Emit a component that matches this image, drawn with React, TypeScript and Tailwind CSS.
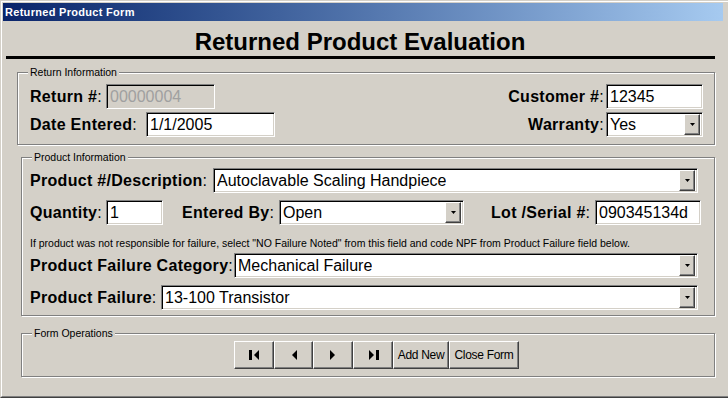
import React from 'react';

// Win2000-style bevels
const sunken =
  'border border-t-[#808080] border-l-[#808080] border-b-white border-r-white shadow-[inset_1px_1px_0_#000,inset_-1px_-1px_0_#d4d0c8]';
const raised =
  'border border-t-white border-l-white border-b-[#404040] border-r-[#404040] shadow-[inset_-1px_-1px_0_#808080]';
const etched = 'border border-[#808080] shadow-[inset_1px_1px_0_#fff,1px_1px_0_#fff]';

const Label: React.FC<{ text: string; className?: string }> = ({ text, className = '' }) => (
  <div className={`shrink-0 whitespace-nowrap text-[16px] leading-[20px] tracking-[0.3px] text-black ${className}`}>
    <span className="font-bold">{text}</span>:
  </div>
);

const TextBox: React.FC<{ value: string; className: string; disabled?: boolean }> = ({
  value,
  className,
  disabled,
}) => (
  <div
    className={`${sunken} ${className} h-[25px] shrink-0 pl-[3px] pt-[1px] text-[16px] leading-[21px] whitespace-nowrap overflow-hidden ${
      disabled ? 'bg-[#d4d0c8] text-[#a0a0a0]' : 'bg-white text-black'
    }`}
  >
    {value}
  </div>
);

const Combo: React.FC<{ value: string; className: string }> = ({ value, className }) => (
  <div
    className={`${sunken} ${className} h-[25px] shrink-0 bg-white flex items-center justify-between pl-[3px] pr-[2px]`}
  >
    <span className="text-[16px] leading-[21px] text-black whitespace-nowrap overflow-hidden">{value}</span>
    <div className={`${raised} w-[16px] h-[21px] bg-[#d4d0c8] flex items-center justify-center shrink-0`}>
      <svg width="5" height="3" viewBox="0 0 5 3">
        <polygon points="0,0 5,0 2.5,3" fill="#000" />
      </svg>
    </div>
  </div>
);

const GroupBox: React.FC<{ title: string; className: string; children: React.ReactNode }> = ({
  title,
  className,
  children,
}) => (
  <div className={`relative ${etched} ${className}`}>
    <span className="absolute -top-[7px] left-[10px] bg-[#d4d0c8] px-[2px] text-[10.5px] leading-[12px] text-black">
      {title}
    </span>
    {children}
  </div>
);

const NavButton: React.FC<{ className: string; children: React.ReactNode }> = ({ className, children }) => (
  <button
    className={`${raised} ${className} h-[28px] bg-[#d4d0c8] flex items-center justify-center text-[12px] tracking-[-0.3px] text-black`}
  >
    {children}
  </button>
);

export default function App() {
  return (
    <div className="w-[728px] h-[398px] bg-[#d4d0c8] font-['Liberation_Sans',Arial,sans-serif] overflow-hidden">
      <div className="h-full border-t border-l border-[#d4d0c8] border-b border-b-[#404040]">
        <div className="h-full border-t border-l border-white border-b border-b-[#808080] pt-[1px] pl-[1px] pr-[5px]">
          {/* Title bar */}
          <div className="h-[18px] bg-linear-to-r from-[#0a246a] to-[#a6caf0] flex items-center pl-[2px]">
            <span className="text-white font-bold text-[11px] tracking-[0.3px]">Returned Product Form</span>
          </div>

          {/* Heading */}
          <div className="pt-[8px] pr-[6px] flex justify-center">
            <h1 className="text-[24px] leading-[25px] font-bold text-black">Returned Product Evaluation</h1>
          </div>
          <div className="mt-[2px] ml-[3px] w-[709px] h-[3px] bg-black" />

          {/* Return Information */}
          <GroupBox title="Return Information" className="mt-[13px] ml-[14px] w-[698px] h-[73px]">
            <div className="flex justify-between pt-[11px] pl-[12px] pr-[11px]">
              <div className="flex flex-col gap-[3px]">
                <div className="flex items-center">
                  <Label text="Return #" className="w-[76px]" />
                  <TextBox value="00000004" className="w-[109px]" disabled />
                </div>
                <div className="flex items-center">
                  <Label text="Date Entered" className="w-[116px]" />
                  <TextBox value="1/1/2005" className="w-[129px]" />
                </div>
              </div>
              <div className="flex flex-col items-end gap-[3px]">
                <div className="flex items-center">
                  <Label text="Customer #" className="mr-[2px]" />
                  <TextBox value="12345" className="w-[97px]" />
                </div>
                <div className="flex items-center">
                  <Label text="Warranty" className="mr-[2px]" />
                  <Combo value="Yes" className="w-[97px]" />
                </div>
              </div>
            </div>
          </GroupBox>

          {/* Product Information */}
          <GroupBox title="Product Information" className="mt-[12px] ml-[18px] w-[694px] h-[159px]">
            <div className="flex flex-col pt-[10px] pl-[8px]">
              <div className="flex items-center">
                <Label text="Product #/Description" className="w-[183px]" />
                <Combo value="Autoclavable Scaling Handpiece" className="w-[485px]" />
              </div>
              <div className="flex items-center mt-[7px]">
                <Label text="Quantity" className="w-[76px]" />
                <TextBox value="1" className="w-[57px]" />
                <Label text="Entered By" className="ml-[19px] w-[97px]" />
                <Combo value="Open" className="w-[185px]" />
                <Label text="Lot /Serial #" className="ml-[27px] w-[104px]" />
                <TextBox value="090345134d" className="w-[106px]" />
              </div>
              <p className="mt-[11px] h-[14px] text-[10.5px] leading-[14px] text-black whitespace-nowrap">
                If product was not responsible for failure, select "NO Failure Noted" from this field and code NPF from
                Product Failure field below.
              </p>
              <div className="flex items-center mt-[3px]">
                <Label text="Product Failure Category" className="w-[204px]" />
                <Combo value="Mechanical Failure" className="w-[464px]" />
              </div>
              <div className="flex items-center mt-[7px]">
                <Label text="Product Failure" className="w-[131px]" />
                <Combo value="13-100 Transistor" className="w-[537px]" />
              </div>
            </div>
          </GroupBox>

          {/* Form Operations */}
          <GroupBox title="Form Operations" className="mt-[17px] ml-[18px] w-[694px] h-[44px]">
            <div className="flex pt-[7px] pl-[212px]">
              <NavButton className="w-[40px]">
                <svg width="11" height="10" viewBox="0 0 11 10">
                  <rect x="0" y="0" width="3" height="10" fill="#000" />
                  <polygon points="10,0 10,10 5,5" fill="#000" />
                </svg>
              </NavButton>
              <NavButton className="w-[39px]">
                <svg width="6" height="10" viewBox="0 0 6 10">
                  <polygon points="6,0 6,10 1,5" fill="#000" />
                </svg>
              </NavButton>
              <NavButton className="w-[40px]">
                <svg width="6" height="10" viewBox="0 0 6 10">
                  <polygon points="0,0 0,10 5,5" fill="#000" />
                </svg>
              </NavButton>
              <NavButton className="w-[40px]">
                <svg width="11" height="10" viewBox="0 0 11 10">
                  <polygon points="1,0 1,10 6,5" fill="#000" />
                  <rect x="8" y="0" width="3" height="10" fill="#000" />
                </svg>
              </NavButton>
              <NavButton className="w-[56px]">Add New</NavButton>
              <NavButton className="w-[70px]">Close Form</NavButton>
            </div>
          </GroupBox>
        </div>
      </div>
    </div>
  );
}
